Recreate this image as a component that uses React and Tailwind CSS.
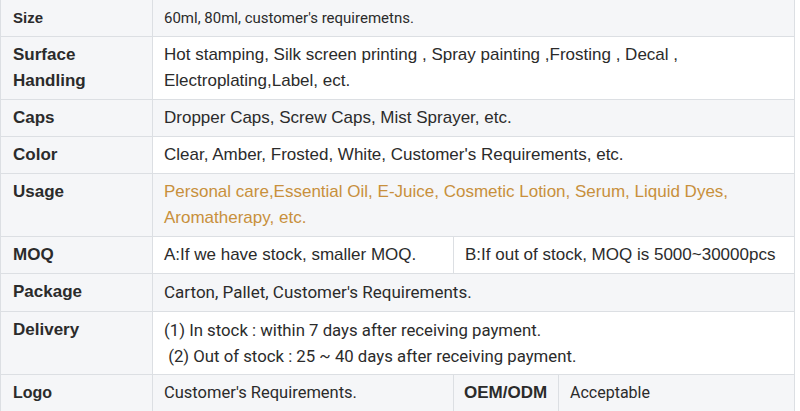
import React from "react";

const A = "font-['Liberation_Sans',Arial,sans-serif]";
const R = "font-['Roboto',sans-serif]";

function Label({ children, size = "text-[17px]" }) {
  return (
    <td className={`w-[152px] border border-[#dcdfe3] bg-[#f5f6f8] px-[12px] py-[5px] align-top ${size} font-bold leading-[26px] text-[#2b2b2b] ${A}`}>
      {children}
    </td>
  );
}

function Val({ children, bg = "bg-white", font = A, size = "text-[17px]", color = "text-[#2b2b2b]", colSpan = 1 }) {
  return (
    <td colSpan={colSpan} className={`border border-[#dcdfe3] ${bg} px-[11px] py-[5px] align-top ${size} leading-[26px] ${color} ${font}`}>
      {children}
    </td>
  );
}

export default function App() {
  const g = "bg-[#f5f6f8]";
  return (
    <div className="w-[800px] h-[411px] overflow-hidden bg-white">
      <table className="w-[795px] border-collapse table-fixed -mt-px">
        <colgroup>
          <col className="w-[152px]" />
          <col className="w-[301px]" />
          <col className="w-[105px]" />
          <col />
        </colgroup>
        <tbody>
          <tr className="h-[37px]">
            <Label size="text-[15px]">Size</Label>
            <Val colSpan={3} bg={g} font={R} size="text-[15px]">60ml, 80ml, customer's requiremetns.</Val>
          </tr>
          <tr className="h-[63px]">
            <Label>Surface<br />Handling</Label>
            <Val colSpan={3}>Hot stamping, Silk screen printing , Spray painting ,Frosting , Decal ,<br />Electroplating,Label, ect.</Val>
          </tr>
          <tr className="h-[37px]">
            <Label>Caps</Label>
            <Val colSpan={3} bg={g}>Dropper Caps, Screw Caps, Mist Sprayer, etc.</Val>
          </tr>
          <tr className="h-[37px]">
            <Label>Color</Label>
            <Val colSpan={3}>Clear, Amber, Frosted, White, Customer's Requirements, etc.</Val>
          </tr>
          <tr className="h-[63px]">
            <Label>Usage</Label>
            <Val colSpan={3} bg={g} color="text-[#c8903c]">Personal care,Essential Oil, E-Juice, Cosmetic Lotion, Serum, Liquid Dyes,<br />Aromatherapy, etc.</Val>
          </tr>
          <tr className="h-[37px]">
            <Label>MOQ</Label>
            <Val>A:If we have stock, smaller MOQ.</Val>
            <Val colSpan={2}>B:If out of stock, MOQ is 5000~30000pcs</Val>
          </tr>
          <tr className="h-[38px]">
            <Label>Package</Label>
            <Val colSpan={3} bg={g} font={R}>Carton, Pallet, Customer's Requirements.</Val>
          </tr>
          <tr className="h-[62px]">
            <Label>Delivery</Label>
            <Val colSpan={3} font={R} size="text-[16.75px]">(1) In stock : within 7 days after receiving payment.<br />&nbsp;(2) Out of stock : 25 ~ 40 days after receiving payment.</Val>
          </tr>
          <tr className="h-[37px]">
            <Label size="text-[16px]">Logo</Label>
            <Val bg={g} font={R} size="text-[16.5px]">Customer's Requirements.</Val>
            <td className={`border border-[#dcdfe3] ${g} px-[10px] py-[5px] align-top text-[17px] font-bold leading-[26px] text-[#2b2b2b] ${A}`}>OEM/ODM</td>
            <Val bg={g} font={R} size="text-[16px]">Acceptable</Val>
          </tr>
        </tbody>
      </table>
    </div>
  );
}
